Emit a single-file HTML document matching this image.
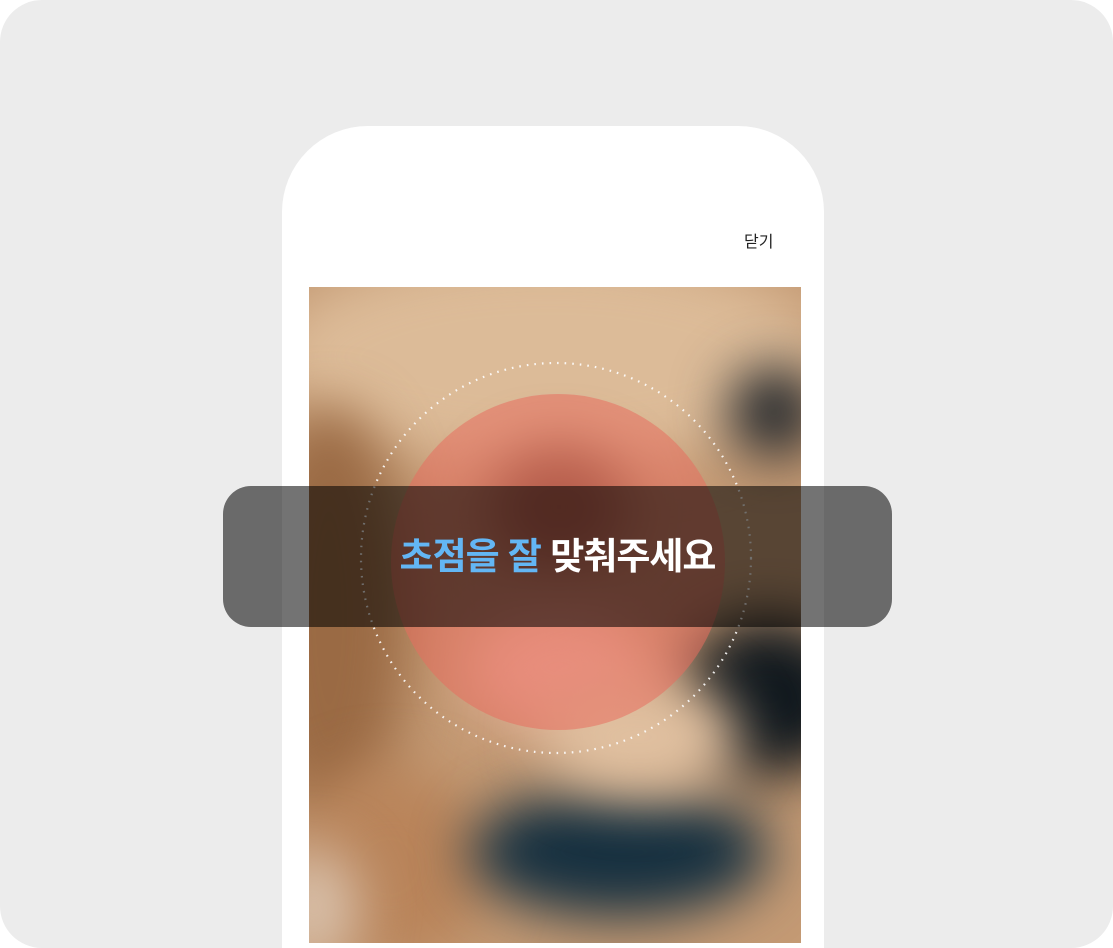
<!DOCTYPE html>
<html><head><meta charset="utf-8"><style>
html,body{margin:0;padding:0;background:#fff;width:1113px;height:948px;overflow:hidden}
.bg{position:absolute;left:0;top:0;width:1113px;height:948px;background:#ececec;border-radius:42px;overflow:hidden}
.phone{position:absolute;left:282px;top:126px;width:542px;height:822px;background:#fff;border-radius:86px 86px 0 0}
.close{position:absolute;left:744px;top:228px;font:16px "Liberation Sans","Noto Sans CJK KR",sans-serif;color:#222}
.photo{position:absolute;left:309px;top:287px;width:492px;height:656px;overflow:hidden;background:#c49a74}
.b{position:absolute;border-radius:50%;filter:blur(28px)}
.red{position:absolute;left:391px;top:394px;width:334px;height:336px;border-radius:50%;background:rgba(232,110,95,.55)}
.banner{position:absolute;left:223px;top:486px;width:669px;height:141px;border-radius:28px;background:rgba(0,0,0,.55)}
.txt{position:absolute;left:223px;width:669px;top:526px;text-align:center;font:bold 37px "Liberation Sans","Noto Sans CJK KR",sans-serif;color:#fff;letter-spacing:-1px}
.txt span{color:#63b6f4}
</style></head><body>
<div class="bg">
<div class="phone"></div>
<div class="close">닫기</div>
<div class="photo">
 <div class="b" style="left:-40px;top:-40px;width:560px;height:220px;background:#dcbb98"></div>
 <div class="b" style="left:-60px;top:120px;width:160px;height:420px;background:#9a6a44"></div>
 <div class="b" style="left:420px;top:80px;width:90px;height:90px;background:#1c2228"></div>
 <div class="b" style="left:180px;top:160px;width:140px;height:120px;background:#7a4a35"></div>
 <div class="b" style="left:370px;top:330px;width:180px;height:160px;background:#10181e"></div>
 <div class="b" style="left:160px;top:320px;width:180px;height:120px;background:#e9b4a0"></div>
 <div class="b" style="left:-20px;top:480px;width:200px;height:200px;background:#b9845a"></div>
 <div class="b" style="left:160px;top:500px;width:300px;height:130px;background:#163040"></div>
 <div class="b" style="left:230px;top:390px;width:200px;height:120px;background:#e0c0a0"></div>
 <div class="b" style="left:-40px;top:560px;width:90px;height:120px;background:#d8c0aa"></div>
</div>
<svg style="position:absolute;left:358px;top:360px" width="396" height="396"><circle cx="198" cy="198" r="195" fill="none" stroke="rgba(255,255,255,.9)" stroke-width="2.2" stroke-dasharray="1.6 6"/></svg>
<div class="red"></div>
<div class="banner"></div>
<div class="txt"><span>초점을 잘</span> 맞춰주세요</div>
</div>
</body></html>
